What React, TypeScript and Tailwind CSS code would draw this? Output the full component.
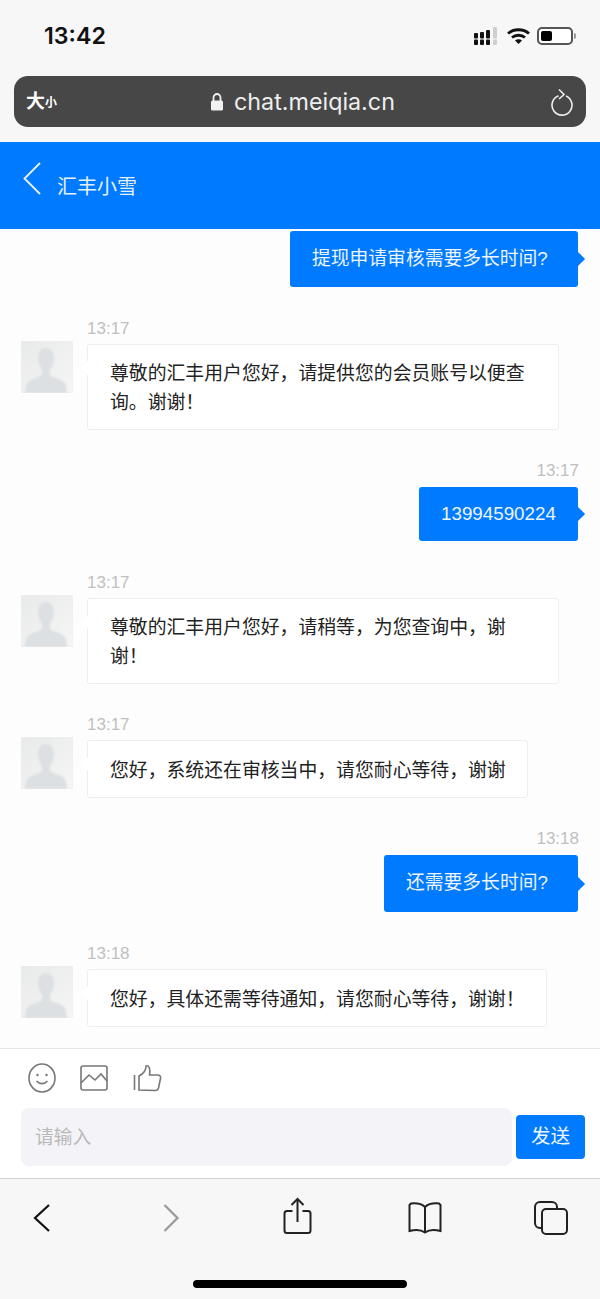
const CJK = { fontFamily: '"Liberation Sans","Noto Sans CJK SC",sans-serif' };

function Avatar() {
  return (
    <div className="w-[52px] h-[52px] shrink-0 bg-[#eeeeee] overflow-hidden">
      <svg width="52" height="52" viewBox="0 0 52 52" style={{ filter: 'blur(0.8px)' }}>
        <defs>
          <linearGradient id="av" x1="0" y1="0" x2="1" y2="1">
            <stop offset="0" stopColor="#e8e9e9" />
            <stop offset="1" stopColor="#f6f6f6" />
          </linearGradient>
        </defs>
        <rect x="-2" y="-2" width="56" height="56" fill="url(#av)" />
        <path d="M25 7c-5 0-8 4-8 10 0 5 2 9 4 12v5c-4 3-12 4-15 8-1 3-2 6-2 12h42c0-6-1-9-2-12-3-4-11-5-15-8v-5c2-3 4-7 4-12 0-6-3-10-8-10z" fill="#dde0e2" />
      </svg>
    </div>
  );
}

function Left({ time, text, width, height, mt }: { time: string; text: React.ReactNode; width: string; height: string; mt: string }) {
  return (
    <div className={`pl-[21px] ${mt}`}>
      <div className="pl-[66px] text-[17px] leading-[18px] text-[#c0c0c0] mb-[3px]">{time}</div>
      <div className="flex items-start">
        <Avatar />
        <div className={`relative ml-[14px] mt-[3px] ${width} ${height} bg-white border border-[#eeeeee] rounded-[3px] pl-[22px] pr-[20px] pt-[2px] flex items-center text-[18.85px] leading-[29px] text-[#222]`}>
          <span className="absolute -left-[6px] top-[18px] w-[10px] h-[10px] rotate-45 bg-white" />
          <span className="relative">{text}</span>
        </div>
      </div>
    </div>
  );
}

function Right({ time, text, width, height, mt, pl }: { time?: string; text: string; width: string; height: string; mt: string; pl: string }) {
  return (
    <div className={`flex flex-col items-end pr-[22px] ${mt}`}>
      {time && <div className="text-[17px] leading-[18px] text-[#c0c0c0] mb-[7px] -mr-[1px]">{time}</div>}
      <div className={`relative ${width} ${height} ${pl} bg-[#007aff] rounded-[3px] flex items-center text-[#eef5ff] text-[18.8px]`}>
        <span className="absolute -right-[5px] top-1/2 -translate-y-1/2 w-[10px] h-[10px] rotate-45 bg-[#007aff]" />
        <span className="relative">{text}</span>
      </div>
    </div>
  );
}

export default function App() {
  return (
    <div className="w-[600px] h-[1299px] flex flex-col bg-[#f7f7f8] overflow-hidden" style={CJK}>
      {/* status bar */}
      <div className="h-[76px] shrink-0 flex items-start justify-between pl-[44px] pr-[24px] pt-[22px]">
        <span className="text-[23.2px] leading-[28px] text-[#111]" style={{ fontFamily: 'Inter,"Liberation Sans",sans-serif', fontWeight: 600 }}>13:42</span>
        <div className="flex items-start pt-[5px]">
          <svg width="24" height="18" viewBox="0 0 24 18">
            <g fill="#111">
              <rect x="0" y="6" width="4" height="5.500" rx="1" /><rect x="0" y="12.500" width="4" height="5.500" rx="1" />
              <rect x="6" y="5" width="4" height="6.500" rx="1" /><rect x="6" y="12.500" width="4" height="5.500" rx="1" />
              <rect x="12" y="3" width="4" height="8.500" rx="1" /><rect x="12" y="12.500" width="4" height="5.500" rx="1" />
            </g>
            <g fill="#cfcfcf"><rect x="19" y="0" width="4" height="11.500" rx="1" /><rect x="19" y="12.500" width="4" height="5.500" rx="1" /></g>
          </svg>
          <svg className="ml-[9px] mt-[1px]" width="23" height="16" viewBox="0 0 23 16" fill="none" stroke="#111" strokeWidth="2.800">
            <path d="M1 5.500c5.800-5 15.200-5 21 0" /><path d="M5 9.500c3.500-3 9.500-3 13 0" /><path d="M11.500 16l-3.500-3.600c2-1.500 5-1.500 7 0z" fill="#111" stroke="none" />
          </svg>
          <div className="ml-[7px] flex items-center">
            <div className="w-[36px] h-[18px] rounded-[5px] border-2 border-[#555] p-[2px] bg-white flex">
              <div className="w-[11px] h-full rounded-[2px] bg-black" />
            </div>
            <div className="w-[2px] h-[6px] bg-[#999] rounded-r-[2px] ml-[1px]" />
          </div>
        </div>
      </div>

      {/* address bar */}
      <div className="mx-[14px] h-[51px] shrink-0 rounded-[14px] bg-[#474747] text-white flex items-center relative px-[12px]">
        <span className="text-[19px] font-bold leading-none">大</span>
        <span className="text-[12px] font-bold leading-none mt-[3px]">小</span>
        <div className="absolute left-[196px] top-0 h-full flex items-center gap-[10px] text-[#eeeeee]">
          <svg width="14" height="20" viewBox="0 0 14 20">
            <path d="M3.500 9V5.500a3.500 3.500 0 017 0V9" fill="none" stroke="#f2f2f2" strokeWidth="1.800" />
            <rect x="1" y="8.500" width="12" height="10" rx="1.500" fill="#f2f2f2" />
          </svg>
          <span className="text-[23.3px] leading-none" style={{ fontFamily: 'Inter,"Liberation Sans",sans-serif', fontWeight: 400 }}>chat.meiqia.cn</span>
        </div>
        <svg className="absolute left-[536px] top-[12px]" width="24" height="28" viewBox="0 0 24 28" fill="none" stroke="#eeeeee" strokeWidth="1.600">
          <path d="M8.500 7.800A10 10 0 1 0 16 8" />
          <path d="M9 1.500l5 5-5 4.500" />
        </svg>
      </div>

      {/* header */}
      <div className="mt-[15px] h-[87px] shrink-0 bg-[#007aff] flex items-start pl-[22px] text-white">
        <svg className="mt-[19px]" width="20" height="36" viewBox="0 0 20 36" fill="none" stroke="#e9f3ff" strokeWidth="1.800"><path d="M18 2L2.500 17.500 18 33" /></svg>
        <span className="ml-[15px] mt-[30px] text-[20px] leading-[30px] text-[#e6f1ff]">汇丰小雪</span>
      </div>

      {/* chat */}
      <div className="h-[819px] shrink-0 bg-[#fdfdfd] overflow-hidden">
        <Right text="提现申请审核需要多长时间?" width="w-[288px]" height="h-[56px]" mt="mt-[2px]" pl="pl-[22px]" />
        <Left mt="mt-[33px]" time="13:17" width="w-[472px]" height="h-[86px]" text={<>尊敬的汇丰用户您好，请提供您的会员账号以便查询。谢谢！</>} />
        <Right mt="mt-[32px]" time="13:17" text="13994590224" width="w-[159px]" height="h-[54px]" pl="pl-[22px]" />
        <Left mt="mt-[33px]" time="13:17" width="w-[472px]" height="h-[86px]" text={<>尊敬的汇丰用户您好，请稍等，为您查询中，谢谢！</>} />
        <Left mt="mt-[32px]" time="13:17" width="w-[441px]" height="h-[58px]" text="您好，系统还在审核当中，请您耐心等待，谢谢" />
        <Right mt="mt-[32px]" time="13:18" text="还需要多长时间?" width="w-[194px]" height="h-[57px]" pl="pl-[22px]" />
        <Left mt="mt-[33px]" time="13:18" width="w-[460px]" height="h-[58px]" text="您好，具体还需等待通知，请您耐心等待，谢谢！" />
      </div>

      {/* composer */}
      <div className="h-[130px] shrink-0 bg-white border-t border-[#e6e6e6]">
        <div className="h-[59px] flex items-center pl-[27px] pb-[2px]">
          <svg width="30" height="30" viewBox="0 0 30 30" fill="none" stroke="#777" strokeWidth="1.600">
            <ellipse cx="15" cy="15" rx="13" ry="14" />
            <circle cx="10.500" cy="12" r="1.200" fill="#777" stroke="none" /><circle cx="19.500" cy="12" r="1.200" fill="#777" stroke="none" />
            <path d="M9.500 18c3 3.500 8 3.500 11 0" />
          </svg>
          <svg className="ml-[22px]" width="30" height="28" viewBox="0 0 30 28" fill="none" stroke="#777" strokeWidth="1.600">
            <rect x="2" y="2" width="26" height="24" rx="2" />
            <path d="M2 19l8-8 6 5 6-6 6 7" />
          </svg>
          <svg className="ml-[24px]" width="30" height="28" viewBox="0 0 30 28" fill="none" stroke="#777" strokeWidth="1.600">
            <path d="M1.500 11v15" />
            <path d="M6 26V12c4-2 7-6 7-10 3-1 4.500 2 3.500 9h8c2.500 0 3.500 1.500 3 3.500l-2 9.500c-.5 1.500-1.500 2.500-3 2.500z" />
          </svg>
        </div>
        <div className="flex items-center pl-[21px] gap-[4px]">
          <div className="w-[491px] h-[58px] rounded-[8px] bg-[#f4f4f8] flex items-center pl-[14px] pt-[2px] text-[18.8px] text-[#b9b9b9]">请输入</div>
          <div className="w-[69px] h-[44px] rounded-[4px] bg-[#007aff] text-[#eef5ff] flex items-center justify-center text-[19.500px]">发送</div>
        </div>
      </div>

      {/* toolbar */}
      <div className="flex-1 border-t border-[#cfcfcf] flex flex-col">
        <div className="h-[78px] relative flex items-start">
          <svg className="absolute left-[32px] top-[24px]" width="20" height="30" viewBox="0 0 20 30" fill="none" stroke="#111" strokeWidth="2.200"><path d="M17 2L3 15l14 13" /></svg>
          <svg className="absolute left-[162px] top-[24px]" width="18" height="30" viewBox="0 0 18 30" fill="none" stroke="#999" strokeWidth="2.200"><path d="M2.500 2l13 13-13 13" /></svg>
          <svg className="absolute left-[283px] top-[18px]" width="30" height="38" viewBox="0 0 30 38" fill="none" stroke="#222" strokeWidth="2">
            <path d="M9.500 14H4a2.500 2.500 0 00-2.500 2.500V33.500A2.500 2.500 0 004 36h21a2.500 2.500 0 002.500-2.500V16.500A2.500 2.500 0 0025 14h-5.500" />
            <path d="M14.500 25V2" /><path d="M8.500 8l6-6 6 6" />
          </svg>
          <svg className="absolute left-[407px] top-[22px]" width="36" height="34" viewBox="0 0 36 34" fill="none" stroke="#222" strokeWidth="2">
            <path d="M18 6c-3-3-8-4-14-3.500L2.500 4v26c6-1.500 12-1 15.500 1.500 3.500-2.500 9.500-3 15.500-1.500V4L32 2.500C26 2 21 3 18 6z" />
            <path d="M18 6v25" />
          </svg>
          <svg className="absolute left-[533px] top-[21px]" width="36" height="36" viewBox="0 0 36 36" fill="none" stroke="#222" strokeWidth="2">
            <rect x="9" y="9" width="25" height="25" rx="4" />
            <path d="M9 28H7a5 5 0 01-5-5V7a5 5 0 015-5h12a5 5 0 015 5v2" />
          </svg>
        </div>
        <div className="flex justify-center mt-[23px]">
          <div className="w-[214px] h-[8px] rounded-full bg-black" />
        </div>
      </div>
    </div>
  );
}
